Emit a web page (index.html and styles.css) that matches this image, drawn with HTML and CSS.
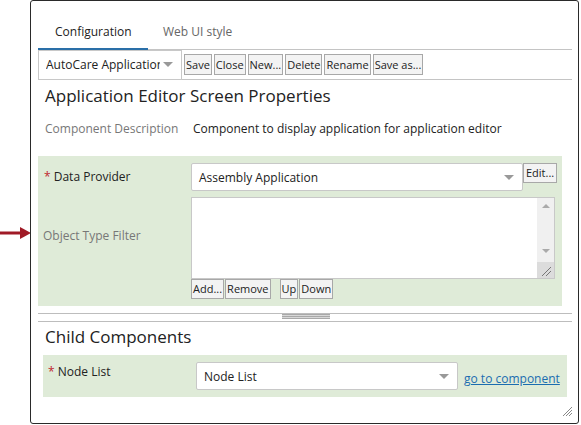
FILE: index.html
```html
<!DOCTYPE html>
<html>
<head>
<meta charset="utf-8">
<link rel="stylesheet" href="styles.css">
</head>
<body>
<div class="arrow">
  <svg width="32" height="14" viewBox="0 0 32 14"><line x1="0" y1="7" x2="22" y2="7" stroke="#a01a26" stroke-width="3"/><polygon points="20,1 31,7 20,13" fill="#a01a26"/></svg>
</div>
<div class="panel">
  <div class="tabs">
    <div class="tab active">Configuration</div>
    <div class="tab">Web UI style</div>
  </div>
  <div class="toolbar">
    <div class="combo"><span class="combo-text">AutoCare Application</span><span class="caret"></span></div>
    <div class="btns">
      <button class="btn">Save</button><button class="btn">Close</button><button class="btn">New...</button><button class="btn">Delete</button><button class="btn">Rename</button><button class="btn">Save as...</button>
    </div>
  </div>
  <h1 class="heading">Application Editor Screen Properties</h1>
  <div class="desc-row">
    <div class="desc-label">Component Description</div>
    <div class="desc-value">Component to display application for application editor</div>
  </div>
  <div class="green g1">
    <div class="row">
      <div class="label"><span class="req">*</span> Data Provider</div>
      <div class="select wide"><span>Assembly Application</span><span class="caret"></span></div>
      <button class="btn edit">Edit...</button>
    </div>
    <div class="row filter">
      <div class="label plain">Object Type Filter</div>
      <div class="filter-box">
        <div class="textarea">
          <div class="scroll">
            <span class="up"></span>
            <span class="down"></span>
            <span class="grip-corner"><svg width="16" height="16" viewBox="0 0 16 16"><line x1="5" y1="14" x2="14" y2="5" stroke="#777" stroke-width="1"/><line x1="9" y1="14" x2="14" y2="9" stroke="#777" stroke-width="1"/></svg></span>
          </div>
        </div>
        <div class="list-btns">
          <button class="btn">Add...</button><button class="btn">Remove</button><button class="btn gap">Up</button><button class="btn">Down</button>
        </div>
      </div>
    </div>
  </div>
  <div class="splitter"><div class="split-grip"></div></div>
  <h2 class="heading h2">Child Components</h2>
  <div class="green g2">
    <div class="label"><span class="req">*</span> Node List</div>
    <div class="select node"><span>Node List</span><span class="caret"></span></div>
    <a class="link" href="#">go to component</a>
  </div>
  <div class="resize"><svg width="12" height="12" viewBox="0 0 12 12"><line x1="2" y1="11" x2="11" y2="2" stroke="#888"/><line x1="5" y1="11" x2="11" y2="5" stroke="#888"/><line x1="8" y1="11" x2="11" y2="8" stroke="#888"/></svg></div>
</div>
</body>
</html>
```
FILE: styles.css
```css
* { box-sizing: border-box; }
body {
  margin: 0;
  background: #fff;
  font-family: "Open Sans", "Noto Sans", sans-serif;
  font-size: 12px;
  color: #222;
  position: relative;
  width: 581px;
  height: 425px;
  overflow: hidden;
}
.arrow { position: absolute; left: 0; top: 226px; }
.panel {
  position: relative;
  margin-left: 30px;
  width: 549px;
  height: 424px;
  border: 1px solid #2a2a2a;
  border-radius: 3px;
  padding: 0 6px 0 7px;
}
.tabs {
  display: flex;
  height: 49px;
  border-bottom: 1px solid #c4c4c4;
  align-items: flex-end;
}
.tab {
  padding: 0 14px 8px 15px;
  color: #666;
  font-size: 12px;
  margin-bottom: -1px;
  border-bottom: 2px solid transparent;
}
.tab.active { color: #222; border-bottom-color: #2a6fa8; width: 110px; padding-left: 17px; }
.toolbar {
  display: flex;
  height: 30px;
  border-bottom: 1px solid #c4c4c4;
  align-items: center;
}
.combo {
  width: 144px;
  height: 30px;
  border: 1px solid #c8c8c8;
  display: flex;
  align-items: center;
  padding-left: 7px;
  overflow: hidden;
}
.combo-text { white-space: nowrap; width: 116px; overflow: hidden; font-size: 12px; }
.caret {
  width: 0; height: 0;
  border-left: 5px solid transparent;
  border-right: 5px solid transparent;
  border-top: 5px solid #999;
  margin-left: auto;
  margin-right: 8px;
}
.combo .caret { margin-left: 3px; }
.btns { display: flex; gap: 2px; margin-left: 2px; }
.btn {
  font-family: inherit;
  font-size: 11px;
  color: #222;
  background: #f3f3f3;
  border: 1px solid #a8a8a8;
  height: 21px;
  padding: 0 1px;
  line-height: 18px;
  border-radius: 0;
  margin: 0;
}
.heading {
  font-weight: normal;
  font-size: 17px;
  margin: 0;
  padding: 4px 0 0 7px;
  height: 31px;
  color: #222;
}
.desc-row {
  display: flex;
  height: 45px;
  align-items: flex-start;
  padding: 9px 0 0 7px;
  font-size: 12px;
}
.desc-label { width: 148px; color: #777; }
.green { background: #dfebd8; }
.g1 {
  width: 524px;
  height: 150px;
  padding-top: 7px;
}
.row { display: flex; align-items: flex-start; }
.label { width: 153px; font-size: 12px; padding-left: 6px; padding-top: 5px; }
.req { color: #c0262d; }
.select {
  height: 28px;
  border: 1px solid #c8c8c8;
  background: #fff;
  display: flex;
  align-items: center;
  padding-left: 7px;
  font-size: 12px;
  border-radius: 2px;
}
.wide { width: 332px; }
.edit { height: 20px; padding: 0 2px; }
.filter { margin-top: 6px; }
.label.plain { color: #777; padding-left: 5px; padding-top: 30px; }
.filter-box { width: 364px; }
.textarea {
  height: 82px;
  border: 1px solid #c8c8c8;
  background: #fff;
  display: flex;
  justify-content: flex-end;
}
.scroll {
  width: 17px;
  background: #f0f0f0;
  display: flex;
  flex-direction: column;
  align-items: center;
}
.up, .down { width: 0; height: 0; border-left: 4px solid transparent; border-right: 4px solid transparent; }
.up { border-bottom: 4px solid #aaa; margin-top: 6px; }
.down { border-top: 4px solid #aaa; margin-top: auto; margin-bottom: 9px; }
.grip-corner { width: 17px; height: 16px; background: #dcdcdc; display: block; }
.grip-corner svg { display: block; }
.list-btns { display: flex; gap: 1px; }
.list-btns .btn { height: 20px; }
.list-btns .gap { margin-left: 8px; }
.splitter {
  height: 9px;
  margin-top: 7px;
  border-top: 1px solid #bdbdbd;
  border-bottom: 1px solid #bdbdbd;
  display: flex;
  justify-content: center;
  width: 534px;
}
.split-grip {
  width: 48px;
  height: 5px;
  background: repeating-linear-gradient(#a9a9a9 0 1px, #d8d8d8 1px 2px);
  margin-left: 2px;
}
.h2 { padding-top: 3px; height: 33px; }
.g2 {
  margin-left: 5px;
  width: 524px;
  height: 42px;
  display: flex;
  align-items: flex-start;
  padding-top: 7px;
}
.g2 .label { width: 153px; padding-left: 5px; padding-top: 1px; }
.node { width: 262px; }
.link { color: #1b6db0; font-size: 12px; margin-left: 6px; margin-top: 8px; }
.resize { position: absolute; right: 5px; bottom: 6px; }
.resize svg { display: block; }
```
